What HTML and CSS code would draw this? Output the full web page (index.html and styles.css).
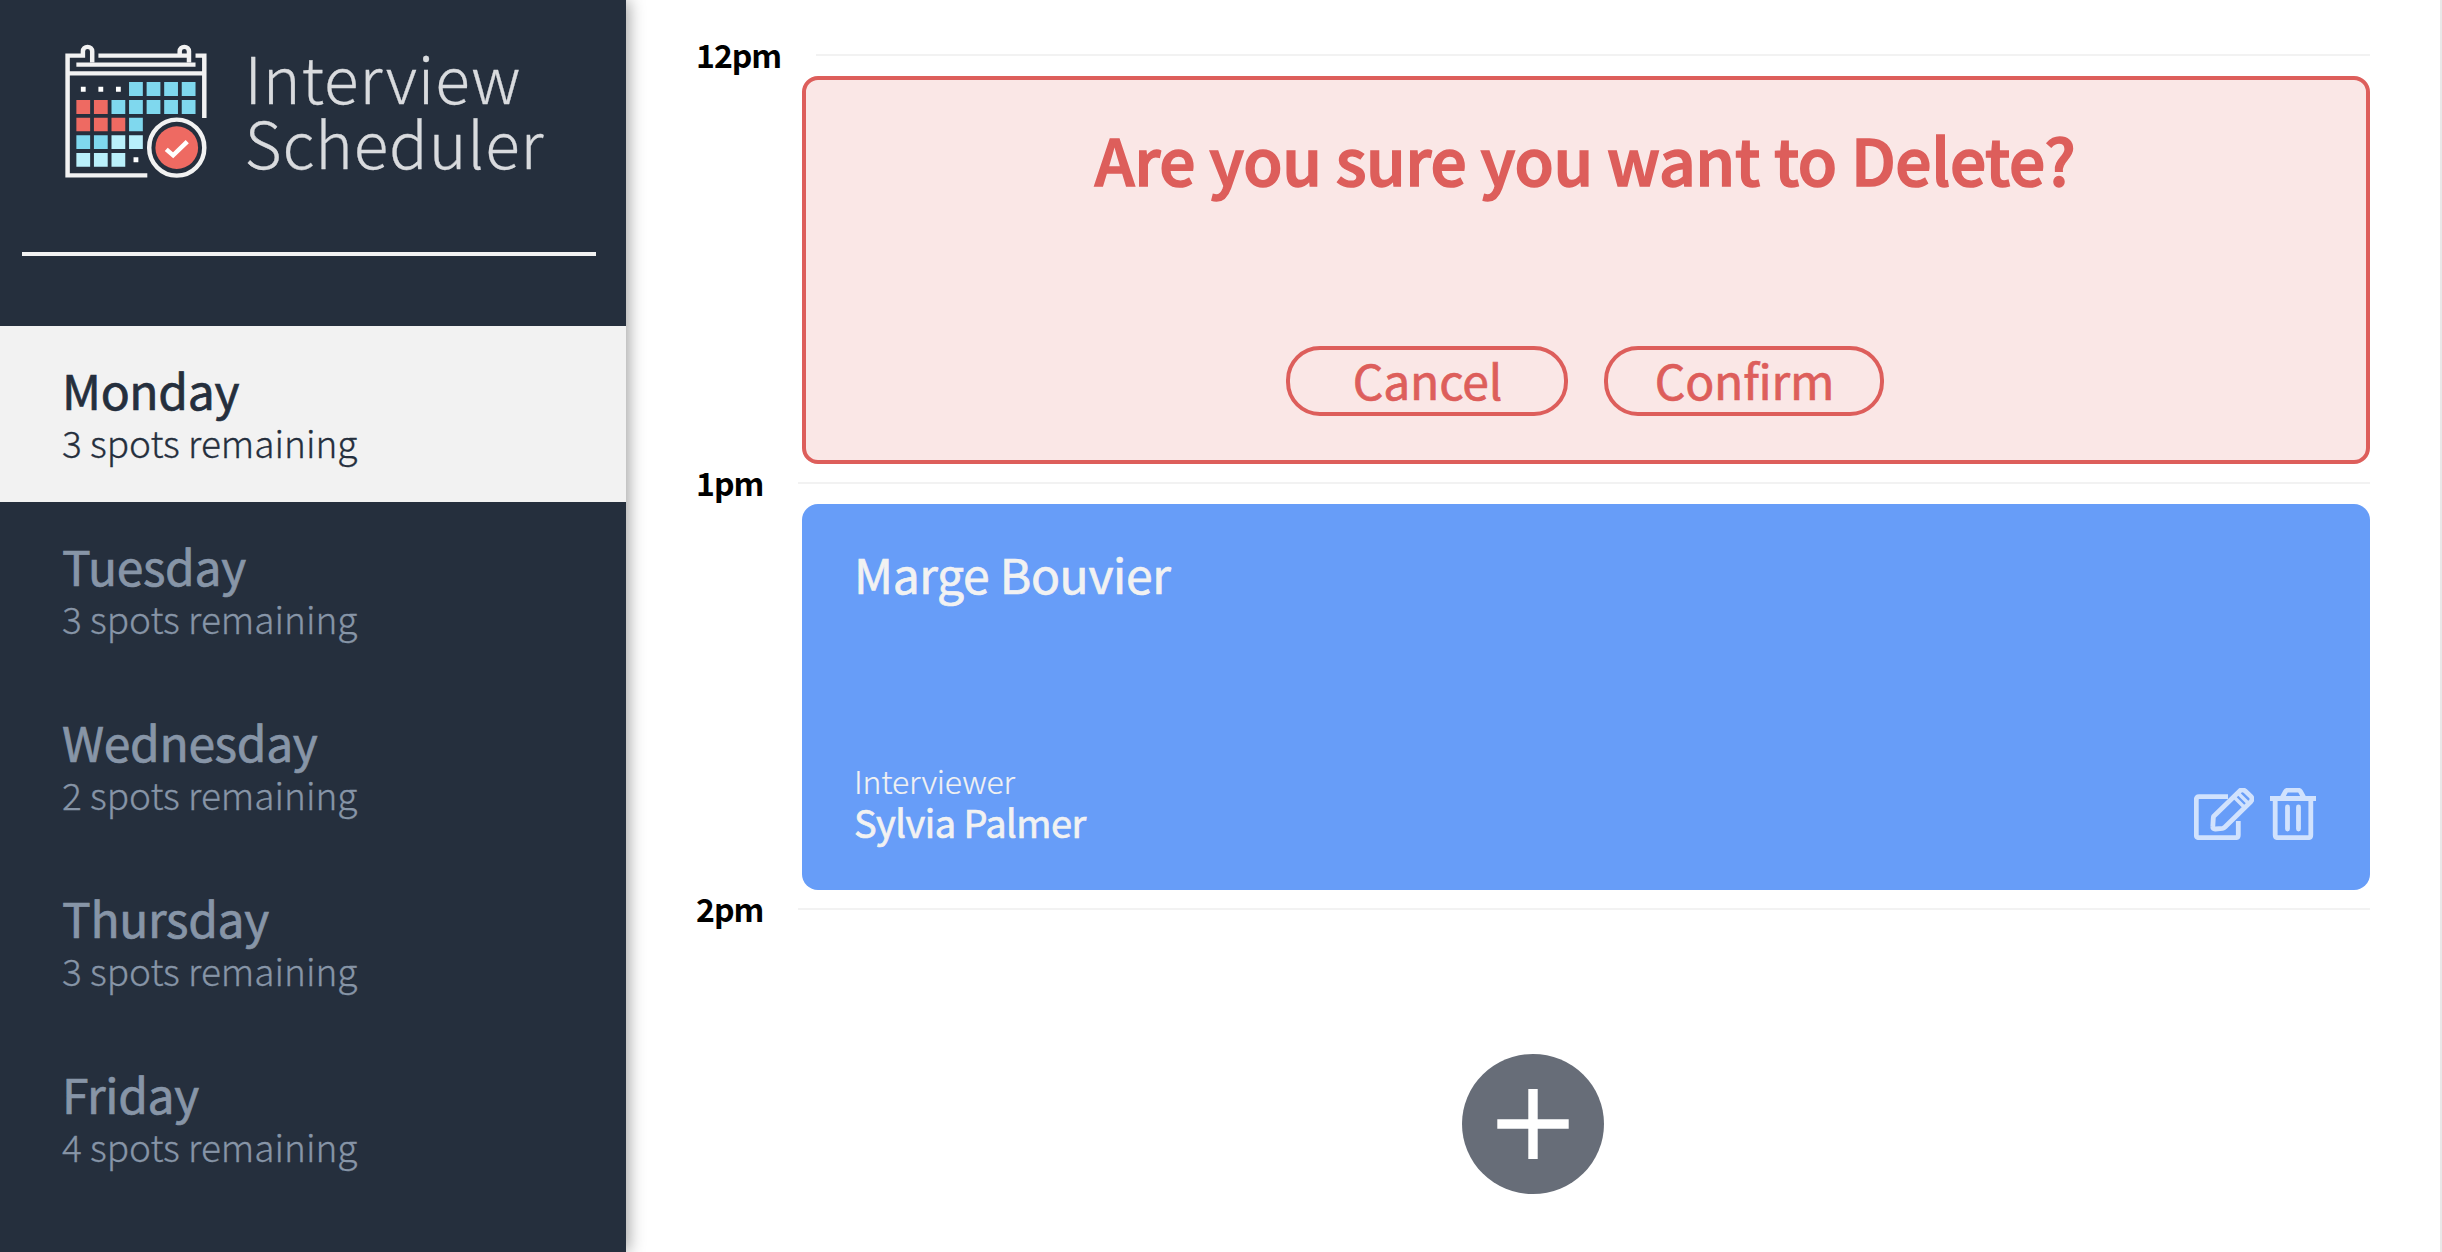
FILE: index.html
```html
<!DOCTYPE html>
<html lang="en">
<head>
<meta charset="utf-8">
<title>Interview Scheduler</title>
<link rel="stylesheet" href="styles.css">
</head>
<body>
<main class="layout">
  <section class="sidebar">
    <div class="logo">
      <svg class="logo__icon" viewBox="74 72 412 403" preserveAspectRatio="none" aria-hidden="true">
        <g fill="none" stroke="#f2f2f2" stroke-width="13">
          <path d="M153 127V94a13 13 0 0 0-27 0V107H81.500V466H313M171 107H434M434 127V94a13 13 0 0 0-27 0V107M453 107H478.500V294M107 134H453M81 160H478"/>
        </g>
        <g fill="#fff"><path d="M120 200h14v15h-14zM171 200h14v15h-14zM222 200h14v15h-14zM273 412h14v15h-14z"/></g>
        <path fill="#7fd8ee" d="M260 186h40v42h-40zM311 186h40v42h-40zM362 186h40v42h-40zM413 186h40v42h-40zM209 240h40v42h-40zM260 240h40v42h-40zM311 240h40v42h-40zM362 240h40v42h-40zM413 240h40v42h-40zM260 293h40v41h-40zM107 346h40v41h-40zM158 346h40v41h-40z"/>
        <path fill="#b9f0fb" d="M209 346h40v41h-40zM260 346h40v41h-40zM107 399h40v41h-40zM158 399h40v41h-40zM209 399h40v41h-40z"/>
        <path fill="#ee6a62" d="M107 240h40v42h-40zM158 240h40v42h-40zM107 293h40v41h-40zM158 293h40v41h-40zM209 293h40v41h-40z"/>
        <ellipse cx="398.500" cy="383" rx="80" ry="84" fill="none" stroke="#f2f2f2" stroke-width="13"/>
        <ellipse cx="398.500" cy="383" rx="62" ry="64" fill="#ee6a62"/>
        <path d="M368 388l20 18 41-41" fill="none" stroke="#fff" stroke-width="13"/>
      </svg>
      <div class="logo__text"><span class="logo__line logo__line--first">Interview</span><span class="logo__line logo__line--second">Scheduler</span></div>
    </div>
    <hr class="sidebar__separator">
    <ul class="days">
      <li class="day day--selected"><h2 class="day__name">Monday</h2><p class="day__spots">3 spots remaining</p></li>
      <li class="day"><h2 class="day__name">Tuesday</h2><p class="day__spots">3 spots remaining</p></li>
      <li class="day"><h2 class="day__name">Wednesday</h2><p class="day__spots">2 spots remaining</p></li>
      <li class="day"><h2 class="day__name">Thursday</h2><p class="day__spots">3 spots remaining</p></li>
      <li class="day"><h2 class="day__name">Friday</h2><p class="day__spots">4 spots remaining</p></li>
    </ul>
  </section>
  <section class="schedule">
    <article class="slot">
      <header class="slot__time slot__time--wide"><h4 class="slot__label">12pm</h4><hr class="slot__line"></header>
      <div class="card card--confirm">
        <h1 class="card__question">Are you sure you want to Delete?</h1>
        <div class="card__buttons">
          <button class="button">Cancel</button>
          <button class="button button--confirm">Confirm</button>
        </div>
      </div>
    </article>
    <article class="slot">
      <header class="slot__time"><h4 class="slot__label">1pm</h4><hr class="slot__line"></header>
      <div class="card card--show">
        <h2 class="card__student">Marge Bouvier</h2>
        <div class="card__footer">
          <div>
            <h4 class="card__role">Interviewer</h4>
            <h3 class="card__interviewer">Sylvia Palmer</h3>
          </div>
          <div class="card__actions">
            <svg width="60" height="52" viewBox="0 0 60 52" fill="none" stroke="#d1e2fd" stroke-width="4.800" stroke-linejoin="round">
              <path d="M34 8.700H5Q2.300 8.700 2.300 11.500V47Q2.300 49.700 5 49.700H41.500Q44.300 49.700 44.300 47V33" />
              <path d="M19.500 28.500L46 2.700Q48.500.800 51 2.800L57 8.500Q59.200 11 57 13.500L31 39Q30 40 28.500 40.300L21.500 41Q18.500 41.300 18.800 38.500L19.300 30Z"/>
              <path d="M40.500 9.500L50.500 19.500M45 6L54 15" stroke-width="3.500"/>
            </svg>
            <svg width="46" height="52" viewBox="0 0 46 52" fill="none" stroke="#d1e2fd" stroke-width="4.800">
              <path d="M0 10.500H46M12 10L15.500 3.500Q16.300 2.200 18 2.200H28Q29.700 2.200 30.500 3.500L34 10M5.200 11V47Q5.200 49.700 8 49.700H38Q40.800 49.700 40.800 47V11"/>
              <path d="M17.500 19V41M28.500 19V41" stroke-linecap="round"/>
            </svg>
          </div>
        </div>
      </div>
    </article>
    <article class="slot">
      <header class="slot__time"><h4 class="slot__label">2pm</h4><hr class="slot__line"></header>
      <div class="empty">
        <svg class="empty__add" viewBox="0 0 142 140"><ellipse cx="71" cy="70" rx="71" ry="70" fill="#676d78"/><path d="M66.300 35h9.400v30.300h31v9.400h-31v30.300h-9.400v-30.300h-31v-9.400h31z" fill="#fff"/></svg>
      </div>
    </article>
  </section>
</main>
</body>
</html>
```
FILE: styles.css
```css
* {
  box-sizing: border-box;
  margin: 0;
  padding: 0;
}

body {
  background: #fff;
  color: #000;
  font-family: "Noto Sans CJK SC", "Open Sans", sans-serif;
  overflow: hidden;
}

.layout {
  display: flex;
  height: 1252px;
}

.sidebar {
  width: 626px;
  flex: none;
  background: #252f3d;
  box-shadow: 2px 0 16px rgba(0, 0, 0, 0.4);
  z-index: 1;
}

.logo {
  display: flex;
  height: 252px;
  padding: 44px 0 0 65px;
}

.logo__icon {
  width: 141.900px;
  height: 134.300px;
}

.logo__text {
  margin: 0 0 0 37.500px;
  color: #d9dbde;
  font-weight: 200;
  font-size: 64px;
  letter-spacing: 0.900px;
  -webkit-text-stroke: 0.300px;
}

.logo__line {
  display: block;
  line-height: 64px;
  white-space: nowrap;
}

.logo__line--second {
  margin-top: 0.500px;
}

.sidebar__separator {
  height: 4px;
  margin: 0 30px 70px 22px;
  border: 0;
  background: #f2f2f2;
}

.days {
  list-style: none;
}

.day {
  height: 176px;
  padding: 38.500px 0 0 62px;
  color: #8795a7;
}

.day--selected {
  background: #f2f2f2;
  color: #252f3d;
}

.day__name {
  font-size: 48px;
  font-weight: 400;
  line-height: 48px;
  letter-spacing: -0.350px;
  -webkit-text-stroke: 0.700px;
}

.day__spots {
  margin-top: 6px;
  font-size: 37px;
  font-weight: 300;
  line-height: 46px;
  -webkit-text-stroke: 0.300px;
}

.schedule {
  flex: 1;
  padding: 32px 70px 0;
  border-right: 2px solid #e8e8e8;
}

.slot__time {
  display: flex;
  align-items: center;
  height: 46px;
}

.slot__label {
  width: 102px;
  padding-bottom: 1px;
  font-size: 32px;
  font-weight: 700;
  line-height: 45px;
  letter-spacing: -1px;
}

.slot__time--wide .slot__label {
  width: 120px;
}

.slot__line {
  flex: 1;
  height: 2px;
  border: 0;
  background: #f2f2f2;
}

.card {
  display: flex;
  flex-direction: column;
  margin-left: 106px;
  border-radius: 16px;
}

.card--confirm {
  height: 388px;
  margin-bottom: -4px;
  align-items: center;
  justify-content: space-between;
  padding: 38px 2px 44px 0;
  border: 4px solid #dd5e5b;
  background: #fae7e6;
  color: #dd5e5b;
}

.slot:first-child {
  height: 428px;
}

.slot__time {
  margin-bottom: -2px;
}

.card__question {
  font-size: 64px;
  font-weight: 500;
  line-height: 80px;
  letter-spacing: -0.350px;
  white-space: nowrap;
  -webkit-text-stroke: 1.600px;
}

.card__buttons {
  display: flex;
  gap: 36px;
}

.button {
  width: 282px;
  height: 70px;
  padding: 0 0 3px 1px;
  border: 4px solid #dd5e5b;
  border-radius: 34px;
  background: transparent;
  color: #dd5e5b;
  font: 400 48px/59px "Noto Sans CJK SC", sans-serif;
  letter-spacing: -0.200px;
  -webkit-text-stroke: 0.700px;
}

.button--confirm {
  width: 280px;
}

.card--show {
  height: 386px;
  margin-bottom: -4px;
  justify-content: space-between;
  padding: 39px 54px 38px 52px;
  background: #679df8;
  color: #f2f2f2;
}

.card__student {
  font-size: 48px;
  font-weight: 400;
  line-height: 60px;
  letter-spacing: -0.350px;
  -webkit-text-stroke: 0.700px;
}

.card__footer {
  display: flex;
  height: 92px;
  justify-content: space-between;
}

.card__role {
  font-size: 32px;
  font-weight: 300;
  line-height: 40px;
  letter-spacing: -0.200px;
  -webkit-text-stroke: 0.200px;
}

.card__interviewer {
  font-size: 38px;
  font-weight: 400;
  line-height: 44px;
  letter-spacing: -0.550px;
  -webkit-text-stroke: 0.700px;
}

.card__actions {
  display: flex;
  align-items: flex-end;
  gap: 16px;
  padding-bottom: 12px;
}

.empty {
  display: flex;
  justify-content: center;
  padding: 124px 0 0 0;
}

.empty__add {
  width: 142px;
  height: 140px;
}
```
